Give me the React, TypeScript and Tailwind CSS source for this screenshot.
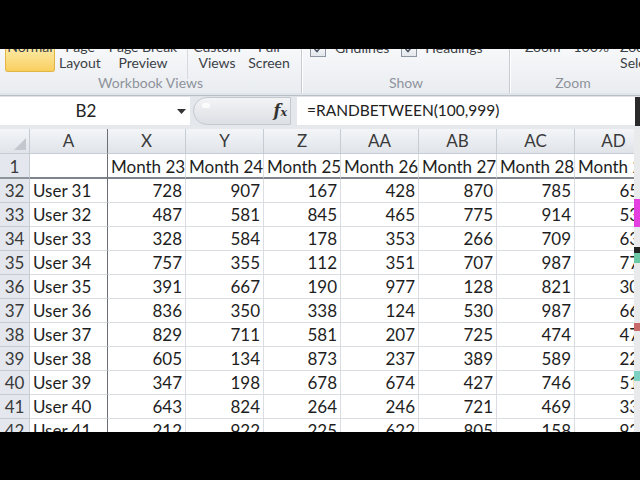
import React from "react";

const rows: (string | number)[][] = [
  [32, "User 31", 728, 907, 167, 428, 870, 785, 653],
  [33, "User 32", 487, 581, 845, 465, 775, 914, 531],
  [34, "User 33", 328, 584, 178, 353, 266, 709, 634],
  [35, "User 34", 757, 355, 112, 351, 707, 987, 772],
  [36, "User 35", 391, 667, 190, 977, 128, 821, 305],
  [37, "User 36", 836, 350, 338, 124, 530, 987, 661],
  [38, "User 37", 829, 711, 581, 207, 725, 474, 474],
  [39, "User 38", 605, 134, 873, 237, 389, 589, 223],
  [40, "User 39", 347, 198, 678, 674, 427, 746, 511],
  [41, "User 40", 643, 824, 264, 246, 721, 469, 339],
  [42, "User 41", 212, 922, 225, 622, 805, 158, 922],
];

const cols = ["A", "X", "Y", "Z", "AA", "AB", "AC", "AD"];
const months = ["", "Month 23", "Month 24", "Month 25", "Month 26", "Month 27", "Month 28", "Month 29"];

const font = { fontFamily: "Lato, 'Open Sans', sans-serif" };

function Check() {
  return (
    <div className="w-[16px] h-[16px] border border-[#8d96a3] bg-gradient-to-b from-[#ffffff] to-[#e3e7ec] flex items-center justify-center">
      <svg width="10" height="10" viewBox="0 0 10 10">
        <path d="M1.5 5 L4 7.5 L8.5 2" stroke="#4a5563" strokeWidth="1.6" fill="none" />
      </svg>
    </div>
  );
}

export default function App() {
  return (
    <div className="w-[640px] h-[480px] bg-black overflow-hidden flex flex-col" style={font}>
      <div className="h-[49px] shrink-0 bg-black" />
      {/* Ribbon */}
      <div className="h-[44px] shrink-0 flex bg-gradient-to-b from-[#f7f8fa] to-[#e9ecf0] overflow-hidden text-[14px] text-[#3b3f46] leading-[16px]">
        {/* Workbook views */}
        <div className="w-[302px] shrink-0 flex flex-col border-r border-[#c7ccd4]">
          <div className="h-[30px] flex items-start">
            <div className="ml-[5px] w-[50px] h-[23px] shrink-0 rounded-b-[3px] border border-t-0 border-[#e2b546] bg-gradient-to-b from-[#fde9a0] to-[#f8cf5e] flex justify-center">
              <span className="mt-[-10px]">Normal</span>
            </div>
            <div className="w-[50px] shrink-0 flex flex-col items-center mt-[-10px]">
              <span>Page</span>
              <span>Layout</span>
            </div>
            <div className="w-[76px] shrink-0 flex flex-col items-center mt-[-10px]">
              <span className="whitespace-nowrap">Page Break</span>
              <span>Preview</span>
            </div>
            <div className="w-[1px] h-[30px] shrink-0 bg-[#d6dae0] ml-[6px]" />
            <div className="w-[54px] shrink-0 ml-[2px] flex flex-col items-center mt-[-10px]">
              <span>Custom</span>
              <span>Views</span>
            </div>
            <div className="w-[50px] shrink-0 flex flex-col items-center mt-[-10px]">
              <span>Full</span>
              <span>Screen</span>
            </div>
          </div>
          <div className="text-center text-[14px] text-[#8e939b] leading-[18px] mt-[-5px]">Workbook Views</div>
        </div>
        {/* Show */}
        <div className="w-[208px] shrink-0 flex flex-col border-r border-[#c7ccd4] border-l border-l-white">
          <div className="h-[30px] flex items-start">
            <div className="ml-[7px] mt-[-8px] shrink-0"><Check /></div>
            <span className="ml-[9px] mt-[-9px]">Gridlines</span>
            <div className="ml-[12px] mt-[-8px] shrink-0"><Check /></div>
            <span className="ml-[8px] mt-[-9px]">Headings</span>
          </div>
          <div className="text-center text-[14px] text-[#8e939b] leading-[18px] mt-[-5px]">Show</div>
        </div>
        {/* Zoom */}
        <div className="flex-1 flex flex-col border-l border-l-white">
          <div className="h-[30px] flex items-start">
            <span className="ml-[14px] mt-[-10px] shrink-0">Zoom</span>
            <span className="ml-[13px] mt-[-10px] shrink-0">100%</span>
            <div className="ml-[11px] mt-[-10px] flex flex-col shrink-0">
              <span className="whitespace-nowrap">Zoom to</span>
              <span>Selection</span>
            </div>
          </div>
          <div className="w-[124px] text-center text-[14px] text-[#8e939b] leading-[18px] mt-[-5px]">Zoom</div>
        </div>
      </div>
      {/* separator */}
      <div className="h-[3px] shrink-0 bg-[#e1e4e8] border-b border-[#b9bfc7]" />
      <div className="h-[1px] shrink-0 bg-[#dfe2e6]" />
      {/* Formula bar */}
      <div className="h-[29px] shrink-0 flex bg-[#e4e7eb] text-[17px] text-[#222]">
        <div className="w-[190px] h-[28px] bg-white relative flex items-center">
          <span className="w-[172px] text-center">B2</span>
          <svg className="absolute left-[177px] top-[12px]" width="9" height="5" viewBox="0 0 9 5">
            <path d="M0 0 H9 L4.5 5 Z" fill="#333" />
          </svg>
        </div>
        <div className="ml-[3px] w-[98px] h-[28px] rounded-l-[14px] border border-[#c4c9d0] bg-gradient-to-b from-[#f3f4f6] to-[#dcdfe4] relative flex items-center">
          <div className="absolute left-[8px] top-[5px] w-[8px] h-[5px] rounded-full bg-white/80" />
          <span className="ml-auto mr-[3px] italic font-bold text-[16px] text-[#333]" style={{ fontFamily: "'DejaVu Serif', serif" }}>
            f<span className="text-[11px]">x</span>
          </span>
        </div>
        <div className="ml-[6px] w-[338px] h-[28px] bg-white flex items-center pl-[10px] text-[15.5px]">=RANDBETWEEN(100,999)</div>
        <div className="flex-1 bg-[#2a2a2a]" />
      </div>
      <div className="h-[3px] shrink-0 bg-[#e6e8eb]" />
      {/* Grid */}
      <div className="h-[303px] shrink-0 flex bg-white">
        <div className="w-[634px] overflow-hidden">
          <div className="w-[653px] grid grid-cols-[30px_78px_78px_78px_77px_78px_78px_78px_78px] text-[17px] text-[#1e1e1e]">
            {/* header row */}
            <div className="h-[25px] bg-gradient-to-b from-[#f3f5f8] to-[#e0e4e9] border-r border-b border-[#c6ccd4] relative">
              <svg className="absolute right-[3px] bottom-[3px]" width="12" height="12" viewBox="0 0 12 12">
                <path d="M12 0 V12 H0 Z" fill="#c3c8cf" />
              </svg>
            </div>
            {cols.map((c, i) => (
              <div
                key={c}
                className={
                  "h-[25px] bg-gradient-to-b from-[#f3f5f8] to-[#e0e4e9] border-b border-[#c6ccd4] flex items-center justify-center text-[#3a3a3a] " +
                  (i === 0 ? "border-r border-r-[#6b6f75]" : "border-r")
                }
              >
                {c}
              </div>
            ))}
            {/* row 1 */}
            <div className="h-[25px] bg-[#e4e8ee] border-r border-[#c6ccd4] border-b-2 border-b-[#8e949c] flex items-center justify-center text-[#3a3a3a] pt-[2px]">1</div>
            {months.map((m, i) => (
              <div
                key={"m" + i}
                className={
                  "h-[25px] border-b-2 border-b-[#7e848b] flex items-center pl-[3px] pt-[2px] whitespace-nowrap overflow-hidden " +
                  (i === 0 ? "border-r border-r-[#6b6f75]" : "border-r border-r-[#dadde2]")
                }
              >
                {m}
              </div>
            ))}
            {rows.map((r) => (
              <React.Fragment key={r[0] as number}>
                <div className="h-[24px] bg-[#e4e8ee] border-r border-b border-[#c6ccd4] flex items-center justify-center text-[#3a3a3a]">
                  {r[0]}
                </div>
                {r.slice(1).map((v, j) => (
                  <div
                    key={j}
                    className={
                      "h-[24px] border-b border-b-[#dadde2] flex items-center whitespace-nowrap " +
                      (j === 0 ? "border-r border-r-[#6b6f75] pl-[3px]" : "border-r border-r-[#dadde2] justify-end pr-[3px]")
                    }
                  >
                    {v}
                  </div>
                ))}
              </React.Fragment>
            ))}
          </div>
        </div>
        <div className="flex-1 bg-[#e9eaec] flex flex-col">
          <div className="h-[70px]" />
          <div className="h-[28px] bg-[#e23ee0]" />
          <div className="h-[20px]" />
          <div className="h-[6px] bg-[#222]" />
          <div className="h-[10px] bg-[#6cc9a5]" />
          <div className="h-[60px]" />
          <div className="h-[8px] bg-[#c86a6a]" />
          <div className="h-[40px]" />
          <div className="h-[10px] bg-[#7dd1c2]" />
        </div>
      </div>
      <div className="flex-1 bg-black" />
    </div>
  );
}
